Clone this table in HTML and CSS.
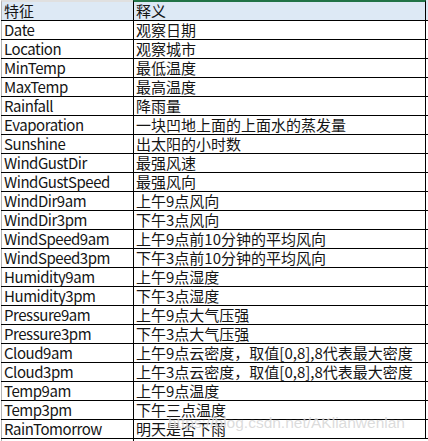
FILE: index.html
```html
<!DOCTYPE html>
<html lang="zh">
<head>
<meta charset="utf-8">
<link rel="stylesheet" href="styles.css">
</head>
<body>
<div class="sheet">
  <div class="row head"><div class="c1">特征</div><div class="c2">释义</div></div>
  <div class="row"><div class="c1">Date</div><div class="c2">观察日期</div></div>
  <div class="row"><div class="c1">Location</div><div class="c2">观察城市</div></div>
  <div class="row"><div class="c1">MinTemp</div><div class="c2">最低温度</div></div>
  <div class="row"><div class="c1">MaxTemp</div><div class="c2">最高温度</div></div>
  <div class="row"><div class="c1">Rainfall</div><div class="c2">降雨量</div></div>
  <div class="row"><div class="c1">Evaporation</div><div class="c2">一块凹地上面的上面水的蒸发量</div></div>
  <div class="row"><div class="c1">Sunshine</div><div class="c2">出太阳的小时数</div></div>
  <div class="row"><div class="c1">WindGustDir</div><div class="c2">最强风速</div></div>
  <div class="row"><div class="c1">WindGustSpeed</div><div class="c2">最强风向</div></div>
  <div class="row"><div class="c1">WindDir9am</div><div class="c2">上午9点风向</div></div>
  <div class="row"><div class="c1">WindDir3pm</div><div class="c2">下午3点风向</div></div>
  <div class="row"><div class="c1">WindSpeed9am</div><div class="c2">上午9点前10分钟的平均风向</div></div>
  <div class="row"><div class="c1">WindSpeed3pm</div><div class="c2">下午3点前10分钟的平均风向</div></div>
  <div class="row"><div class="c1">Humidity9am</div><div class="c2">上午9点湿度</div></div>
  <div class="row"><div class="c1">Humidity3pm</div><div class="c2">下午3点湿度</div></div>
  <div class="row"><div class="c1">Pressure9am</div><div class="c2">上午9点大气压强</div></div>
  <div class="row"><div class="c1">Pressure3pm</div><div class="c2">下午3点大气压强</div></div>
  <div class="row"><div class="c1">Cloud9am</div><div class="c2">上午9点云密度，取值[0,8],8代表最大密度</div></div>
  <div class="row"><div class="c1">Cloud3pm</div><div class="c2">上午3点云密度，取值[0,8],8代表最大密度</div></div>
  <div class="row"><div class="c1">Temp9am</div><div class="c2">上午9点温度</div></div>
  <div class="row"><div class="c1">Temp3pm</div><div class="c2">下午三点温度</div></div>
  <div class="row"><div class="c1">RainTomorrow</div><div class="c2">明天是否下雨</div></div>
  <div class="row tail"><div class="c1"></div><div class="c2"></div></div>
</div>
<div class="watermark">https://blog.csdn.net/AKlianwenlan</div>
</body>
</html>
```
FILE: styles.css
```css
html, body {
  margin: 0;
  padding: 0;
  background: #ffffff;
}
body {
  font-family: "Noto Sans CJK SC", "Noto Sans", sans-serif;
  font-size: 15px;
  color: #151515;
  position: relative;
  width: 428px;
  height: 441px;
  overflow: hidden;
}
.sheet {
  padding-left: 1px;
  display: flex;
  flex-direction: column;
}
.row {
  display: grid;
  grid-template-columns: 132px 293px;
  height: 19px;
  line-height: 18px;
  box-sizing: border-box;
  border-bottom: 1px solid #000;
}
.c1 {
  border-left: 1px solid #b4b4b4;
  padding-left: 2px;
  letter-spacing: -0.45px;
  white-space: nowrap;
}
.head .c1 {
  letter-spacing: 0;
}
.c2 {
  border-left: 1px solid #000;
  border-right: 1px solid #000;
  padding-left: 2px;
  white-space: nowrap;
}
.head {
  height: 21px;
  background: #dde9f5;
}
.head .c1 {
  border-top: 2px solid #e0e0e0;
}
.head .c2 {
  border-top: 2px solid #217346;
}
.tail {
  border-bottom: none;
  height: 3px;
}
.tail .c2 {
  border-right: none;
}
.watermark {
  position: absolute;
  left: 168px;
  top: 414px;
  font-family: "Liberation Sans", Arial, sans-serif;
  font-size: 15.5px;
  color: rgba(190, 190, 190, 0.55);
  text-shadow: 0 0 1px rgba(255,255,255,0.8);
  white-space: nowrap;
}
```
